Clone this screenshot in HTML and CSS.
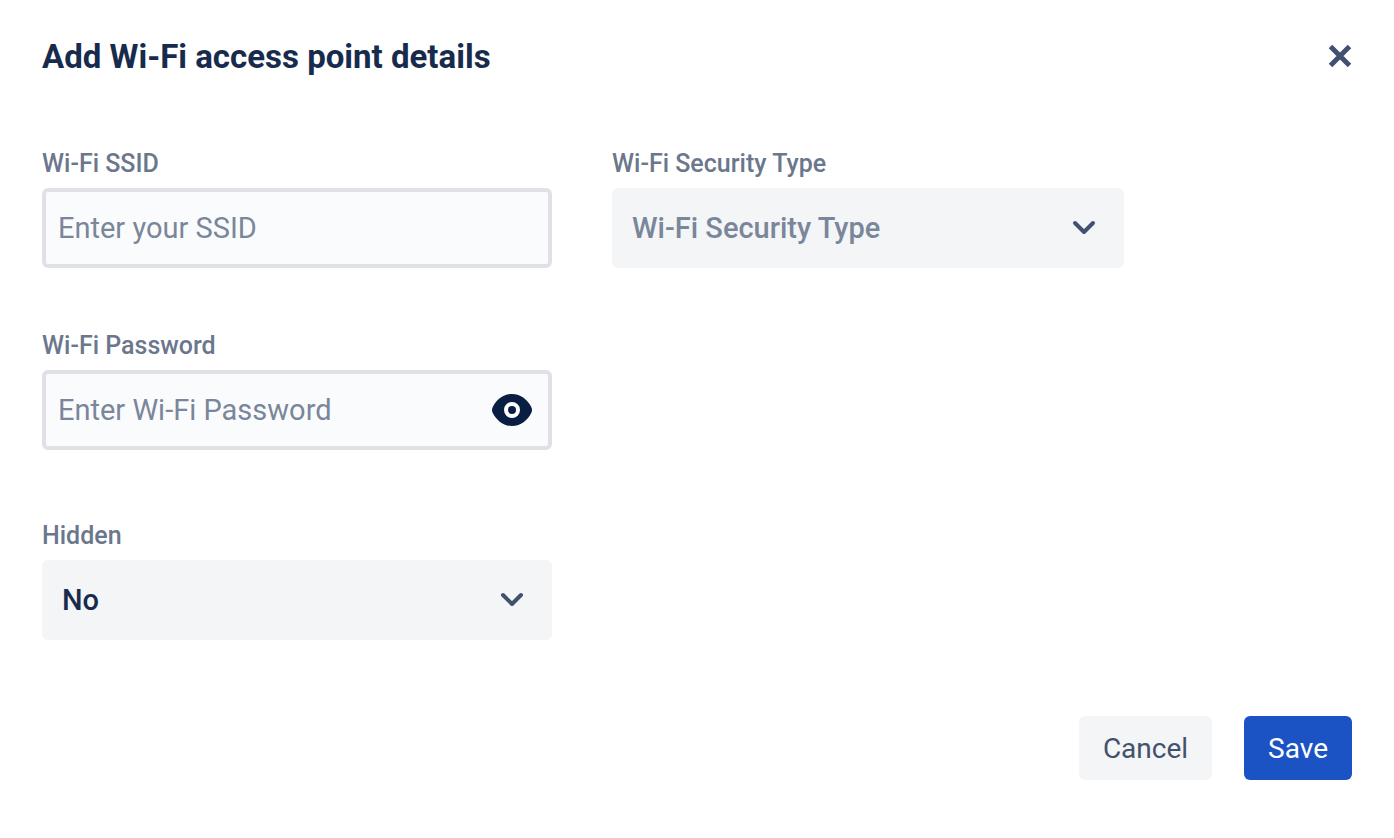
FILE: index.html
```html
<!DOCTYPE html>
<html lang="en">
<head>
<meta charset="utf-8">
<meta name="viewport" content="width=device-width, initial-scale=1">
<title>Add Wi-Fi access point details</title>
<link rel="stylesheet" href="styles.css">
</head>
<body>
<main class="dialog">
  <header class="dialog-header">
    <h1 class="dialog-title">Add Wi-Fi access point details</h1>
    <button class="icon-button" type="button" aria-label="Close">
      <svg class="icon-close" viewBox="0 0 24 24" aria-hidden="true"><path d="M2.5 2.5 21.5 21.5M21.5 2.5 2.5 21.5"/></svg>
    </button>
  </header>
  <form class="form">
    <div class="fields">
      <div class="field">
        <label class="label" for="ssid">Wi-Fi SSID</label>
        <input class="input" id="ssid" type="text" placeholder="Enter your SSID">
      </div>
      <div class="field">
        <label class="label" for="security">Wi-Fi Security Type</label>
        <div class="control">
          <select class="select select-empty" id="security">
            <option>Wi-Fi Security Type</option>
          </select>
          <svg class="chevron" viewBox="0 0 24 16" aria-hidden="true"><path d="M3 3 12 12 21 3"/></svg>
        </div>
      </div>
      <div class="field field-start">
        <label class="label" for="password">Wi-Fi Password</label>
        <div class="control">
          <input class="input input-password" id="password" type="password" placeholder="Enter Wi-Fi Password">
          <button class="icon-button reveal" type="button" aria-label="Show password">
            <svg class="icon-eye" viewBox="0 0 40 32" aria-hidden="true">
              <path class="eye-shape" d="M20 0C11 0 4.500 6 1 12.500Q-1 16 1 19.500C4.500 26 11 32 20 32S35.500 26 39 19.500Q41 16 39 12.500C35.500 6 29 0 20 0Z"/>
              <circle class="eye-ring" cx="20" cy="16" r="6"/>
            </svg>
          </button>
        </div>
      </div>
      <div class="field field-start field-hidden">
        <label class="label" for="hidden">Hidden</label>
        <div class="control">
          <select class="select" id="hidden">
            <option>No</option>
            <option>Yes</option>
          </select>
          <svg class="chevron" viewBox="0 0 24 16" aria-hidden="true"><path d="M3 3 12 12 21 3"/></svg>
        </div>
      </div>
    </div>
    <div class="actions">
      <button class="button button-cancel" type="button">Cancel</button>
      <button class="button button-save" type="submit">Save</button>
    </div>
  </form>
</main>
</body>
</html>
```
FILE: styles.css
```css
* {
  box-sizing: border-box;
}

body {
  margin: 0;
  background: #fff;
  color: #172b4d;
  font-family: Roboto, "Liberation Sans", sans-serif;
}

.dialog {
  padding: 36px 42px 58px;
}

.dialog-header {
  display: flex;
  align-items: flex-start;
  justify-content: space-between;
  margin-bottom: 70px;
}

.dialog-title {
  margin: 0;
  font-size: 33px;
  font-weight: 700;
  line-height: 42px;
}

.icon-button {
  display: flex;
  padding: 0;
  border: 0;
  background: none;
  cursor: pointer;
}

.dialog-header .icon-button {
  padding: 8px 0;
}

.icon-close {
  width: 24px;
  height: 24px;
  fill: none;
  stroke: #42526e;
  stroke-width: 5;
}

.fields {
  display: grid;
  grid-template-columns: 255fr 256fr 84fr;
  gap: 62px 60px;
}

.field {
  display: flex;
  flex-direction: column;
  gap: 8px;
  min-width: 0;
}

.field-start {
  grid-column: 1;
}

.field-hidden {
  margin-top: 8px;
}

.label {
  color: #6b778c;
  font-size: 25px;
  font-weight: 500;
  line-height: 32px;
}

.control {
  position: relative;
}

.input,
.select {
  display: block;
  width: 100%;
  height: 80px;
  border-radius: 6px;
  font-family: inherit;
  font-size: 29px;
}

.input {
  padding: 0 12px;
  border: 4px solid #dfe1e6;
  background: #fafbfc;
  color: #172b4d;
}

.input::placeholder {
  color: #7a869a;
  opacity: 1;
}

.input-password {
  padding-right: 72px;
}

.select {
  appearance: none;
  padding: 0 64px 0 20px;
  border: 0;
  background: #f4f5f7;
  color: #172b4d;
  font-weight: 500;
}

.select-empty {
  color: #7a869a;
}

.chevron {
  position: absolute;
  top: 32px;
  right: 28px;
  width: 24px;
  height: 16px;
  fill: none;
  stroke: #42526e;
  stroke-width: 4;
  stroke-linecap: round;
  stroke-linejoin: round;
  pointer-events: none;
}

.reveal {
  position: absolute;
  top: 24px;
  right: 20px;
}

.icon-eye {
  width: 40px;
  height: 32px;
}

.eye-shape {
  fill: #091e42;
}

.eye-ring {
  fill: none;
  stroke: #fff;
  stroke-width: 4;
}

.actions {
  display: flex;
  justify-content: flex-end;
  gap: 32px;
  margin-top: 76px;
}

.button {
  height: 64px;
  padding: 0 24px;
  border: 0;
  border-radius: 6px;
  font-family: inherit;
  font-size: 28px;
  cursor: pointer;
}

.button-cancel {
  background: #f4f5f7;
  color: #42526e;
}

.button-save {
  background: #1b53c5;
  color: #fff;
}
```
